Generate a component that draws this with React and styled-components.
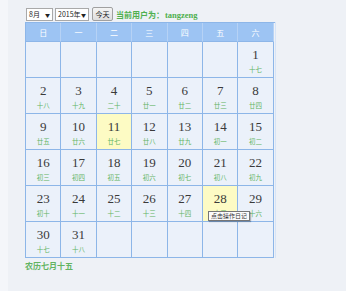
import React from "react";
import styled, { createGlobalStyle } from "styled-components";

const Global = createGlobalStyle`
  html, body { margin: 0; padding: 0; background: #eef1f6; }
  body { font-family: "Liberation Serif", "Noto Sans CJK SC", serif; }
`;

const Page = styled.div`
  width: 346px;
  height: 291px;
  box-sizing: border-box;
  padding: 7px 0 0 25px;
  background: linear-gradient(to right, #f4f6fa 0, #f4f6fa 8px, #eef1f6 8px);
`;

const Toolbar = styled.div`
  display: flex;
  align-items: center;
  gap: 2px;
  height: 14px;
  margin-bottom: 1px;
  margin-left: 1px;
`;

const Select = styled.div`
  display: flex;
  align-items: center;
  justify-content: space-between;
  box-sizing: border-box;
  width: ${(p) => p.$w}px;
  height: 13px;
  padding: 0 2px;
  background: #fff;
  border: 1px solid #a9a9a9;
  font-family: "Noto Sans CJK SC", sans-serif;
  font-size: 7px;
  white-space: nowrap;
  color: #222;
  line-height: 1;
`;

const Arrow = styled.span`
  font-size: 5px;
  color: #222;
`;

const Button = styled.div`
  box-sizing: border-box;
  height: 14px;
  width: 21px;
  margin-left: 1px;
  display: flex;
  align-items: center;
  justify-content: center;
  background: linear-gradient(#f4f4f4, #dedede);
  border: 1px solid #a0a0a0;
  border-radius: 2px;
  font-family: "Noto Sans CJK SC", sans-serif;
  font-size: 7px;
  color: #222;
`;

const User = styled.span`
  color: #4fb04f;
  font-weight: bold;
  font-family: "Noto Sans CJK SC", serif;
  font-size: 8px;
  margin-left: 1px;
  white-space: nowrap;
`;

const UserName = styled.span`
  font-family: "Liberation Serif", serif;
  font-size: 8.5px;
  margin-left: 1px;
`;

const Grid = styled.div`
  display: grid;
  grid-template-columns: repeat(7, 35.4px);
  grid-template-rows: 19px repeat(6, 36px);
  width: 249px;
  border-left: 1px solid #8db6e8;
  border-top: 1px solid #8db6e8;
  box-shadow: 1px 0 0 #d6e4f7;
`;

const Head = styled.div`
  box-sizing: border-box;
  background: #9dc4f3;
  border-right: 1px solid #b6d2f5;
  border-bottom: 1px solid #8db6e8;
  color: #fff;
  display: flex;
  align-items: center;
  justify-content: center;
  font-family: "Noto Sans CJK SC", sans-serif;
  font-size: 8px;
`;

const Cell = styled.div`
  box-sizing: border-box;
  border-right: 1px solid #8db6e8;
  border-bottom: 1px solid #8db6e8;
  background: ${(p) => (p.$hl ? "#fdfbc4" : "#ebf1fa")};
  display: flex;
  flex-direction: column;
  align-items: center;
  position: relative;
`;

const Num = styled.div`
  margin-top: 5px;
  font-size: 13px;
  line-height: 16px;
  color: #3a3a3a;
`;

const Lunar = styled.div`
  margin-top: 2px;
  font-family: "Noto Sans CJK SC", sans-serif;
  font-size: 6.5px;
  line-height: 9px;
  color: #62b462;
`;

const Footer = styled.div`
  margin-top: 2px;
  color: #62b462;
  font-family: "Noto Sans CJK SC", serif;
  font-size: 8px;
  font-weight: bold;
`;

const Tip = styled.div`
  position: absolute;
  left: 5px;
  top: 25px;
  z-index: 2;
  white-space: nowrap;
  background: #fbfbfb;
  border: 1px solid #767676;
  box-shadow: 1px 1px 1px rgba(0,0,0,0.25);
  padding: 0 2px;
  font-family: "Noto Sans CJK SC", sans-serif;
  font-size: 6px;
  line-height: 8px;
  color: #333;
`;

const heads = ["日", "一", "二", "三", "四", "五", "六"];
const lunar = {
  1: "十七", 2: "十八", 3: "十九", 4: "二十", 5: "廿一", 6: "廿二", 7: "廿三", 8: "廿四",
  9: "廿五", 10: "廿六", 11: "廿七", 12: "廿八", 13: "廿九", 14: "初一", 15: "初二",
  16: "初三", 17: "初四", 18: "初五", 19: "初六", 20: "初七", 21: "初八", 22: "初九",
  23: "初十", 24: "十一", 25: "十二", 26: "十三", 27: "十四", 28: "十五", 29: "十六",
  30: "十七", 31: "十八",
};

export default function App() {
  const cells = [];
  for (let i = 0; i < 42; i++) {
    const d = i - 5;
    cells.push(d >= 1 && d <= 31 ? d : null);
  }
  return (
    <Page>
      <Global />
      <Toolbar>
        <Select $w={27}>8月<Arrow>▼</Arrow></Select>
        <Select $w={34}>2015年<Arrow>▼</Arrow></Select>
        <Button>今天</Button>
        <User>当前用户为：<UserName>tangzeng</UserName></User>
      </Toolbar>
      <Grid>
        {heads.map((h) => (
          <Head key={h}>{h}</Head>
        ))}
        {cells.map((d, i) => (
          <Cell key={i} $hl={d === 11 || d === 28}>
            {d && <Num>{d}</Num>}
            {d && <Lunar>{lunar[d]}</Lunar>}
            {d === 28 && <Tip>点击操作日记</Tip>}
          </Cell>
        ))}
      </Grid>
      <Footer>农历七月十五</Footer>
    </Page>
  );
}
